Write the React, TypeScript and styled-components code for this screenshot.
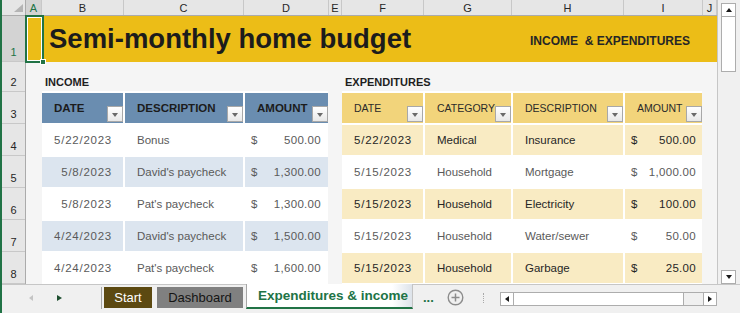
import React from "react";
import styled, { createGlobalStyle } from "styled-components";

const GREEN = "#217346";

const GlobalStyle = createGlobalStyle`
  html, body {
    margin: 0;
    padding: 0;
    background: #fff;
  }
  body {
    font-family: "Liberation Sans", Arial, sans-serif;
  }
`;

const columns = [
  { label: "A", width: 16, selected: true },
  { label: "B", width: 82 },
  { label: "C", width: 120 },
  { label: "D", width: 85 },
  { label: "E", width: 13 },
  { label: "F", width: 82 },
  { label: "G", width: 88 },
  { label: "H", width: 112 },
  { label: "I", width: 79 },
  { label: "J", width: 14 },
];

const rowHeights = [46, 30, 32, 32, 32, 32, 32, 32];

const income = [
  { date: "5/22/2023", description: "Bonus", amount: "500.00" },
  { date: "5/8/2023", description: "David's paycheck", amount: "1,300.00" },
  { date: "5/8/2023", description: "Pat's paycheck", amount: "1,300.00" },
  { date: "4/24/2023", description: "David's paycheck", amount: "1,500.00" },
  { date: "4/24/2023", description: "Pat's paycheck", amount: "1,600.00" },
];

const expenditures = [
  { date: "5/22/2023", category: "Medical", description: "Insurance", amount: "500.00" },
  { date: "5/15/2023", category: "Household", description: "Mortgage", amount: "1,000.00" },
  { date: "5/15/2023", category: "Household", description: "Electricity", amount: "100.00" },
  { date: "5/15/2023", category: "Household", description: "Water/sewer", amount: "50.00" },
  { date: "5/15/2023", category: "Household", description: "Garbage", amount: "25.00" },
];

const INCOME_COLS = "81px 118px 83px";
const EXP_COLS = "81px 86px 110px 77px";

const App = () => {
  return (
    <>
      <GlobalStyle />
      <Window>
        <Sheet>
          <ColHeaderRow>
            <Corner>
              <svg width="9" height="8" viewBox="0 0 9 8">
                <polygon points="9,0 9,8 0,8" fill="#b4b4b4" />
              </svg>
            </Corner>
            {columns.map((c) => (
              <ColHeader key={c.label} $selected={c.selected}>
                {c.label}
              </ColHeader>
            ))}
          </ColHeaderRow>
          <Body>
            <RowHeaderCol>
              {rowHeights.map((h, i) => (
                <RowHeader key={i} $h={h} $selected={i === 0}>
                  {i + 1}
                </RowHeader>
              ))}
            </RowHeaderCol>
            <Content>
              <TitleBand>
                <SelectedCell />
                <Title>Semi-monthly home budget</Title>
                <Subtitle>{"INCOME  & EXPENDITURES"}</Subtitle>
              </TitleBand>
              <Lower>
                <Section $width={286}>
                  <SectionLabel>INCOME</SectionLabel>
                  <Table>
                    <TableRow $cols={INCOME_COLS}>
                      {["DATE", "DESCRIPTION", "AMOUNT"].map((h) => (
                        <HeaderCell key={h} $variant="blue">
                          {h}
                          <FilterButton />
                        </HeaderCell>
                      ))}
                    </TableRow>
                    {income.map((r, i) => {
                      const bg = i % 2 === 1 ? "#dce5ef" : "#fff";
                      return (
                        <TableRow key={i} $cols={INCOME_COLS}>
                          <Cell $bg={bg} $tone="#5a5a5a" $align="right" $numeric>
                            {r.date}
                          </Cell>
                          <Cell $bg={bg} $tone="#5a5a5a">
                            {r.description}
                          </Cell>
                          <AmountCell $bg={bg} $tone="#5a5a5a" $padRight={7}>
                            <span>$</span>
                            <Num>{r.amount}</Num>
                          </AmountCell>
                        </TableRow>
                      );
                    })}
                  </Table>
                </Section>
                <Section $width={360}>
                  <SectionLabel>EXPENDITURES</SectionLabel>
                  <Table>
                    <TableRow $cols={EXP_COLS}>
                      {["DATE", "CATEGORY", "DESCRIPTION", "AMOUNT"].map((h) => (
                        <HeaderCell key={h} $variant="gold">
                          {h}
                          <FilterButton />
                        </HeaderCell>
                      ))}
                    </TableRow>
                    {expenditures.map((r, i) => {
                      const banded = i % 2 === 0;
                      const bg = banded ? "#f9ebc3" : "#fff";
                      const tone = banded ? "#262626" : "#5a5a5a";
                      return (
                        <TableRow key={i} $cols={EXP_COLS}>
                          <Cell $bg={bg} $tone={tone} $align="right" $numeric>
                            {r.date}
                          </Cell>
                          <Cell $bg={bg} $tone={tone}>
                            {r.category}
                          </Cell>
                          <Cell $bg={bg} $tone={tone}>
                            {r.description}
                          </Cell>
                          <AmountCell $bg={bg} $tone={tone} $padRight={6}>
                            <span>$</span>
                            <Num>{r.amount}</Num>
                          </AmountCell>
                        </TableRow>
                      );
                    })}
                  </Table>
                </Section>
              </Lower>
            </Content>
          </Body>
        </Sheet>

        <VScroll>
          <ScrollButton $dir="up" />
          <VThumb />
          <VTrack />
          <ScrollButton $dir="down" />
        </VScroll>

        <TabBar>
          <NavArrows>
            <NavArrow $dir="left" />
            <NavArrow $dir="right" />
          </NavArrows>
          <TabDivider />
          <SheetTab $bg="#5c4911" $color="#fff" $width={48}>
            Start
          </SheetTab>
          <SheetTab $bg="#808080" $color="#141414" $width={86}>
            Dashboard
          </SheetTab>
          <ActiveTab>Expenditures &amp; income</ActiveTab>
          <More>...</More>
          <AddSheet>
            <svg width="17" height="17" viewBox="0 0 17 17">
              <circle cx="8.5" cy="8.5" r="7.3" fill="none" stroke="#8c8c8c" strokeWidth="1.4" />
              <path d="M8.5 4.5v8M4.5 8.5h8" stroke="#8c8c8c" strokeWidth="1.5" />
            </svg>
          </AddSheet>
          <DottedDivider />
          <HScroll>
            <ScrollButton $dir="left" />
            <HThumb />
            <HTrack />
            <ScrollButton $dir="right" />
          </HScroll>
        </TabBar>
      </Window>
    </>
  );
};

export default App;

const Window = styled.div`
  width: 740px;
  height: 313px;
  box-sizing: border-box;
  border-left: 2px solid ${GREEN};
  display: grid;
  grid-template-columns: 716px 22px;
  grid-template-rows: 284px 29px;
  background: #f0f0f0;
  overflow: hidden;
`;

const Sheet = styled.div`
  display: flex;
  flex-direction: column;
  border-right: 1px solid #c6c6c6;
  background: #f5f5f5;
  overflow: hidden;
`;

const ColHeaderRow = styled.div`
  display: grid;
  grid-template-columns: 24px ${columns.map((c) => `${c.width}px`).join(" ")};
  height: 16px;
  box-sizing: border-box;
  border-bottom: 1px solid #ababab;
  background: #e6e6e6;
`;

const Corner = styled.div`
  display: flex;
  justify-content: flex-end;
  align-items: flex-end;
  padding: 0 2px 3px 0;
  box-sizing: border-box;
  border-right: 1px solid #ababab;
`;

const ColHeader = styled.div<{ $selected?: boolean }>`
  display: flex;
  align-items: center;
  justify-content: center;
  box-sizing: border-box;
  border-right: 1px solid #c8c8c8;
  font-size: 11px;
  color: ${(p) => (p.$selected ? GREEN : "#262626")};
  background: ${(p) => (p.$selected ? "#d3d3d3" : "transparent")};
`;

const Body = styled.div`
  display: flex;
  flex: 1;
`;

const RowHeaderCol = styled.div`
  width: 24px;
  flex-shrink: 0;
  box-sizing: border-box;
  display: flex;
  flex-direction: column;
  background: #e6e6e6;
  border-right: 1px solid #ababab;
`;

const RowHeader = styled.div<{ $h: number; $selected?: boolean }>`
  height: ${(p) => p.$h}px;
  box-sizing: border-box;
  border-bottom: 1px solid #c8c8c8;
  display: flex;
  align-items: flex-end;
  justify-content: center;
  padding-bottom: 3px;
  font-size: 11px;
  line-height: 11px;
  color: ${(p) => (p.$selected ? GREEN : "#262626")};
  background: ${(p) => (p.$selected ? "#d3d3d3" : "transparent")};
`;

const Content = styled.div`
  flex: 1;
  display: flex;
  flex-direction: column;
`;

const TitleBand = styled.div`
  position: relative;
  height: 46px;
  box-sizing: border-box;
  background: #ecbd17;
  display: flex;
  justify-content: space-between;
  align-items: center;
  padding: 0 27px 0 23px;
`;

const SelectedCell = styled.div`
  position: absolute;
  left: -1px;
  top: -1px;
  width: 19px;
  height: 48px;
  box-sizing: border-box;
  border: 2px solid ${GREEN};
  box-shadow: inset 0 0 0 1px #fff;
  z-index: 2;

  &::after {
    content: "";
    position: absolute;
    right: -4px;
    bottom: -4px;
    width: 4px;
    height: 4px;
    background: ${GREEN};
    border: 1px solid #fff;
  }
`;

const Title = styled.h1`
  margin: 0;
  font-size: 27.5px;
  font-weight: 700;
  color: #1c1c1c;
`;

const Subtitle = styled.div`
  font-size: 12px;
  font-weight: 700;
  color: #262626;
  white-space: pre;
  padding-top: 4px;
`;

const Lower = styled.div`
  flex: 1;
  display: flex;
  gap: 14px;
  padding-left: 16px;
`;

const Section = styled.section<{ $width: number }>`
  width: ${(p) => p.$width}px;
  display: flex;
  flex-direction: column;
`;

const SectionLabel = styled.h2`
  margin: 0;
  height: 29px;
  box-sizing: border-box;
  display: flex;
  align-items: flex-end;
  padding: 0 0 3px 3px;
  font-size: 11px;
  line-height: 11px;
  font-weight: 700;
  color: #1f1f1f;
`;

const Table = styled.div`
  flex: 1;
  background: #fff;
  padding: 2px 0 1px;
  display: flex;
  flex-direction: column;
  gap: 2px;
`;

const TableRow = styled.div<{ $cols: string }>`
  display: grid;
  grid-template-columns: ${(p) => p.$cols};
  column-gap: 2px;
  height: 30px;
`;

const HeaderCell = styled.div<{ $variant: "blue" | "gold" }>`
  display: flex;
  justify-content: space-between;
  align-items: center;
  padding-left: 12px;
  background: ${(p) => (p.$variant === "blue" ? "#6a8db0" : "#f2d47b")};
  font-size: ${(p) => (p.$variant === "blue" ? "11.5px" : "10.5px")};
  font-weight: ${(p) => (p.$variant === "blue" ? 700 : 400)};
  color: ${(p) => (p.$variant === "blue" ? "#1c1c1c" : "#2a2a2a")};
`;

const FilterButton = styled.span`
  align-self: flex-end;
  margin-bottom: 1px;
  width: 16px;
  height: 16px;
  box-sizing: border-box;
  border: 1px solid #a8a8a8;
  background: linear-gradient(#ffffff, #e8e8e8);
  display: flex;
  align-items: center;
  justify-content: center;

  &::before {
    content: "";
    margin-top: 1px;
    border-left: 3.5px solid transparent;
    border-right: 3.5px solid transparent;
    border-top: 4px solid #6a6a6a;
  }
`;

const Cell = styled.div<{
  $bg: string;
  $tone: string;
  $align?: "left" | "right";
  $numeric?: boolean;
}>`
  display: flex;
  align-items: center;
  justify-content: ${(p) => (p.$align === "right" ? "flex-end" : "flex-start")};
  padding: 0 11px 0 12px;
  background: ${(p) => p.$bg};
  color: ${(p) => p.$tone};
  font-size: 11.5px;
  letter-spacing: ${(p) => (p.$numeric ? "0.75px" : "0")};
  white-space: nowrap;
`;

const AmountCell = styled.div<{ $bg: string; $tone: string; $padRight: number }>`
  display: flex;
  align-items: center;
  justify-content: space-between;
  padding: 0 ${(p) => p.$padRight}px 0 6px;
  background: ${(p) => p.$bg};
  color: ${(p) => p.$tone};
  font-size: 11.5px;
`;

const Num = styled.span`
  letter-spacing: 0.3px;
`;

const VScroll = styled.div`
  display: flex;
  flex-direction: column;
  padding: 3px 4px 0 3px;
  background: #f0f0f0;
`;

const arrow = {
  up: "border-left: 3.5px solid transparent; border-right: 3.5px solid transparent; border-bottom: 4px solid #1a1a1a;",
  down: "border-left: 3.5px solid transparent; border-right: 3.5px solid transparent; border-top: 4px solid #1a1a1a;",
  left: "border-top: 3.5px solid transparent; border-bottom: 3.5px solid transparent; border-right: 4px solid #1a1a1a;",
  right: "border-top: 3.5px solid transparent; border-bottom: 3.5px solid transparent; border-left: 4px solid #1a1a1a;",
};

const ScrollButton = styled.div<{ $dir: "up" | "down" | "left" | "right" }>`
  width: ${(p) => (p.$dir === "up" || p.$dir === "down" ? "15px" : "14px")};
  height: 14px;
  flex-shrink: 0;
  box-sizing: border-box;
  border: 1px solid #adadad;
  background: #fff;
  display: flex;
  align-items: center;
  justify-content: center;

  &::before {
    content: "";
    ${(p) => arrow[p.$dir]}
  }
`;

const VThumb = styled.div`
  height: 55px;
  box-sizing: border-box;
  border: 1px solid #adadad;
  border-top: none;
  background: #fff;
`;

const VTrack = styled.div`
  flex: 1;
`;

const TabBar = styled.div`
  grid-column: 1 / -1;
  display: flex;
  align-items: flex-start;
  box-sizing: border-box;
  border-top: 1px solid #c6c6c6;
  background: #f0f0f0;
  padding: 2px 23px 0 0;
`;

const NavArrows = styled.div`
  width: 99px;
  height: 21px;
  box-sizing: border-box;
  display: flex;
  align-items: center;
  gap: 24px;
  padding-left: 27px;
`;

const NavArrow = styled.span<{ $dir: "left" | "right" }>`
  border-top: 3.5px solid transparent;
  border-bottom: 3.5px solid transparent;
  ${(p) =>
    p.$dir === "left"
      ? "border-right: 4px solid #c4c4c4;"
      : "border-left: 5px solid #1e4f30;"}
`;

const TabDivider = styled.span`
  width: 1px;
  height: 22px;
  margin-right: 2px;
  background: #a6a6a6;
`;

const SheetTab = styled.div<{ $bg: string; $color: string; $width: number }>`
  width: ${(p) => p.$width}px;
  height: 21px;
  margin-right: 5px;
  flex-shrink: 0;
  display: flex;
  align-items: center;
  justify-content: center;
  background: ${(p) => p.$bg};
  color: ${(p) => p.$color};
  font-size: 13px;

  & + & {
    margin-right: 3px;
  }
`;

const ActiveTab = styled.div`
  width: 167px;
  height: 25px;
  margin-top: -3px;
  box-sizing: border-box;
  flex-shrink: 0;
  display: flex;
  align-items: center;
  padding-left: 11px;
  border-left: 1px solid #a6a6a6;
  border-right: 1px solid #c4c4c4;
  border-bottom: 2px solid ${GREEN};
  background: linear-gradient(to right, #ffffff 88%, #dde3ea);
  color: ${GREEN};
  font-size: 13.5px;
  font-weight: 700;
  white-space: nowrap;
`;

const More = styled.div`
  height: 21px;
  margin-left: 10px;
  display: flex;
  align-items: center;
  color: ${GREEN};
  font-size: 13px;
  font-weight: 700;
`;

const AddSheet = styled.div`
  margin: 2px 0 0 13px;
  display: flex;
`;

const DottedDivider = styled.span`
  height: 10px;
  margin: 6px 0 0 19px;
  border-left: 1px dotted #a8a8a8;
`;

const HScroll = styled.div`
  margin: 5px 0 0 auto;
  width: 217px;
  height: 14px;
  display: flex;
`;

const HThumb = styled.div`
  width: 170px;
  box-sizing: border-box;
  border: 1px solid #adadad;
  border-left: none;
  background: #fff;
`;

const HTrack = styled.div`
  flex: 1;
  box-sizing: border-box;
  border-top: 1px solid #adadad;
  border-bottom: 1px solid #adadad;
  background: #f0f0f0;
`;
